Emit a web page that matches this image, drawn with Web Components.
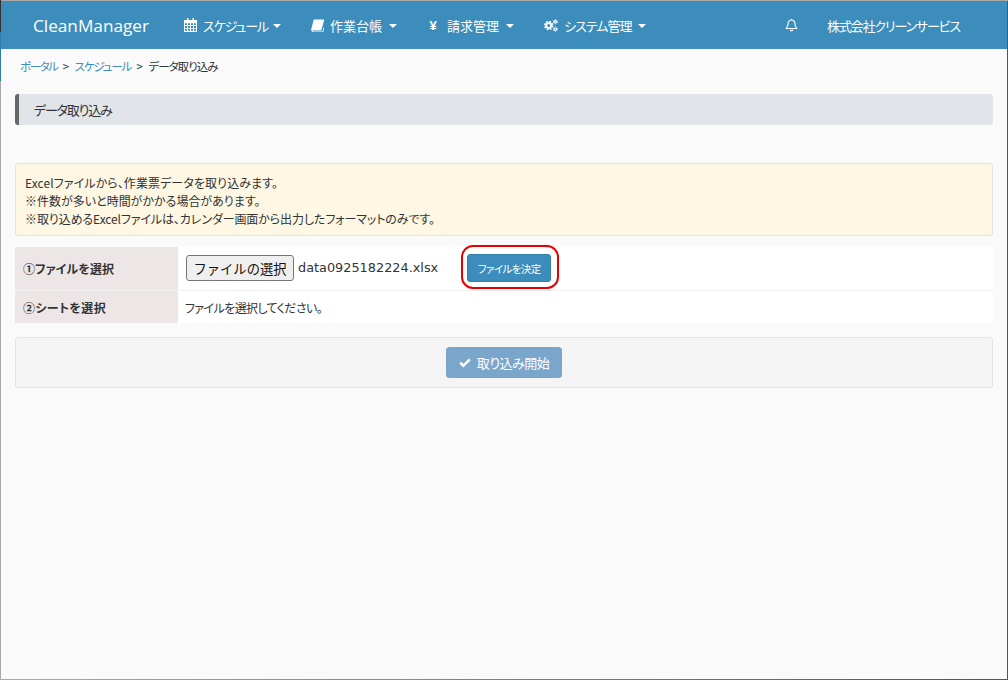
<!DOCTYPE html>
<html lang="ja">
<head>
<meta charset="utf-8">
<title>データ取り込み</title>
<style>
  html, body { margin: 0; height: 100%; }
  body {
    background:
      linear-gradient(#333 0 32px, #2f7ea8 32px 81px, #a8a8a8 81px) left top / 1px 100% no-repeat,
      linear-gradient(#a8a8a8, #a8a8a8) left top / 100% 1px no-repeat,
      linear-gradient(#555, #555) right top / 1px 100% no-repeat,
      linear-gradient(to right, #aaa, #555) left bottom / 100% 1px no-repeat,
      #fafafa;
    font-family: "Noto Sans CJK JP", "Liberation Sans", sans-serif;
    font-size: 12px;
    font-feature-settings: "palt";
    color: #333;
    box-sizing: border-box;
    padding: 1px;
    overflow: hidden;
  }
</style>
</head>
<body>
<cm-navbar></cm-navbar>
<cm-breadcrumb></cm-breadcrumb>
<cm-page>
  <cm-title>データ取り込み</cm-title>
  <cm-notice>
    <div style="letter-spacing:.08px">Excelファイルから、作業票データを取り込みます。</div>
    <div>※件数が多いと時間がかかる場合があります。</div>
    <div style="letter-spacing:-.1px">※取り込めるExcelファイルは、カレンダー画面から出力したフォーマットのみです。</div>
  </cm-notice>
  <cm-import-form></cm-import-form>
  <cm-footer-bar></cm-footer-bar>
</cm-page>

<script>
'use strict';
const ICONS = {
  calendar: `<svg viewBox="0 0 13 14" width="13" height="14" fill="currentColor"><path fill-rule="evenodd" d="M0 2h13v12H0zM1 5.200v1.900h2V5.200zM4 5.200v1.900h2V5.200zM7 5.200v1.900h2V5.200zM10 5.200v1.900h2V5.200zM1 8v1.900h2V8zM4 8v1.900h2V8zM7 8v1.900h2V8zM10 8v1.900h2V8zM1 10.800v1.900h2v-1.900zM4 10.800v1.900h2v-1.900zM7 10.800v1.900h2v-1.900zM10 10.800v1.900h2v-1.900z"/><path d="M3 0h1.500v3H3zM8.500 0H10v3H8.500z"/></svg>`,
  book: `<svg viewBox="0 0 13 13" width="13" height="13" fill="currentColor"><path d="M3.500 0.500H12.500c.5 0 .7.400.6.900L10.600 10.500c-.2.800-.7 1-1.300 1H2.200c-.6 0-.9.300-.7.700.1.300.5.400.9.400h8.500c.4 0 .7-.2.800-.6l2-7.200.4.300c.2.200.3.500.2.900l-2.300 7.700c-.2.600-.6.800-1.200.8H2C.9 12.500.200 11.700.200 10.700c0-.3 0-.5.100-.8L2.500 1.400C2.700.800 3 .5 3.500.500z"/></svg>`,
  bell: `<svg viewBox="0 0 14 14" width="13" height="14" fill="none" stroke="currentColor" stroke-width="1.200"><path d="M7 1.600c-2.400 0-3.700 1.700-3.700 3.900 0 3-1 4.300-2 5.300h11.400c-1-1-2-2.300-2-5.300 0-2.200-1.300-3.900-3.700-3.900z"/><path d="M5.700 12c.1.800.6 1.300 1.300 1.300s1.200-.5 1.300-1.300" /><path d="M7 .5v1" /></svg>`,
  cogs: `<svg viewBox="0 0 14 13" width="14" height="13" fill="none" stroke="currentColor"><circle cx="4.700" cy="6.500" r="2.500" stroke-width="1.900"/><circle cx="4.700" cy="6.500" r="4" stroke-width="1.400" stroke-dasharray="1.800 1.340"/><circle cx="11.300" cy="2.800" r="1.200" stroke-width="1.100"/><circle cx="11.300" cy="2.800" r="2.100" stroke-width="1" stroke-dasharray="1.100 1.100"/><circle cx="11.300" cy="10.200" r="1.200" stroke-width="1.100"/><circle cx="11.300" cy="10.200" r="2.100" stroke-width="1" stroke-dasharray="1.100 1.100"/></svg>`,
  check: `<svg viewBox="0 0 13 11" width="12" height="10" fill="currentColor"><path d="M4.700 10.500 .3 6.100l1.900-1.900 2.500 2.500L10.800.6l1.900 1.900z"/></svg>`
};

class CmNavItem extends HTMLElement {
  connectedCallback() {
    const icon = this.getAttribute('icon');
    this.attachShadow({mode: 'open'}).innerHTML = `
  <style>
    :host {
      display: flex;
      align-items: center;
      color: #fff;
      font-size: 13px;
      white-space: nowrap;
    }
    .icon { display: flex; margin-right: 6px; }
    .yen { font: bold 13px "Liberation Sans", sans-serif; margin: 0 10px 0 2px; width: 8px; text-align: center; }
    .caret {
      margin-left: var(--caret-gap, 7px);
      border-top: 4px solid #fff;
      border-left: 4px solid transparent;
      border-right: 4px solid transparent;
      margin-top: 2px;
    }
  </style>
  ${icon === 'yen' ? '<span class="yen">¥</span>' : `<span class="icon">${ICONS[icon]}</span>`}
  <slot></slot>
  <span class="caret"></span>`;
  }
}
customElements.define('cm-nav-item', CmNavItem);

class CmNavbar extends HTMLElement {
  connectedCallback() {
    this.attachShadow({mode: 'open'}).innerHTML = `
  <style>
    :host {
      display: flex;
      align-items: center;
      height: 48px;
      background: #3c8dbc;
      color: #fff;
      padding-left: 32px;
    }
    .brand {
      font: 17.200px "Open Sans", "Liberation Sans", sans-serif;
      margin-right: 35px;
    }
    nav { display: flex; gap: 30px; }
    .bell { display: flex; margin-left: auto; }
    .company { font-size: 13px; letter-spacing: -1.150px; margin: 0 47px 0 29px; white-space: nowrap; }
  </style>
  <span class="brand">CleanManager</span>
  <nav>
    <cm-nav-item icon="calendar" style="letter-spacing:-1.1px;--caret-gap:5px">スケジュール</cm-nav-item>
    <cm-nav-item icon="book">作業台帳</cm-nav-item>
    <cm-nav-item icon="yen">請求管理</cm-nav-item>
    <cm-nav-item icon="cogs" style="letter-spacing:-1px">システム管理</cm-nav-item>
  </nav>
  <span class="bell">${ICONS.bell}</span>
  <span class="company">株式会社クリーンサービス</span>`;
  }
}
customElements.define('cm-navbar', CmNavbar);

class CmBreadcrumb extends HTMLElement {
  connectedCallback() {
    this.attachShadow({mode: 'open'}).innerHTML = `
  <style>
    :host {
      display: flex;
      gap: 5.500px;
      padding: 9px 0 0 19px;
      height: 36px;
      box-sizing: border-box;
      font-size: 11.500px;
      color: #333;
      line-height: 17px;
    }
    a { color: #3c8dbc; text-decoration: none; letter-spacing: -1.150px; }
    a.top { letter-spacing: -1.500px; }
    .here { letter-spacing: -1px; }
  </style>
  <a class="top" href="#">ポータル</a><span>&gt;</span><a href="#">スケジュール</a><span>&gt;</span><span class="here">データ取り込み</span>`;
  }
}
customElements.define('cm-breadcrumb', CmBreadcrumb);

class CmPage extends HTMLElement {
  connectedCallback() {
    this.attachShadow({mode: 'open'}).innerHTML = `
  <style>
    :host { display: block; padding: 9px 14px 0; }
  </style>
  <slot></slot>`;
  }
}
customElements.define('cm-page', CmPage);

class CmTitle extends HTMLElement {
  connectedCallback() {
    this.attachShadow({mode: 'open'}).innerHTML = `
  <style>
    :host {
      display: flex;
      align-items: center;
      height: 31px;
      box-sizing: border-box;
      background: #e1e5ea;
      border-left: 4px solid #666;
      border-radius: 3px;
      padding-left: 15px;
      font-size: 13px;
      letter-spacing: -1.200px;
    }
  </style>
  <slot></slot>`;
  }
}
customElements.define('cm-title', CmTitle);

class CmNotice extends HTMLElement {
  connectedCallback() {
    this.attachShadow({mode: 'open'}).innerHTML = `
  <style>
    :host {
      display: block;
      margin-top: 38px;
      height: 73px;
      box-sizing: border-box;
      padding: 10px 9px;
      background: #fdf7e3;
      border: 1px solid #e3e3e3;
      border-radius: 3px;
      font-size: 12px;
      line-height: 18px;
    }
  </style>
  <slot></slot>`;
  }
}
customElements.define('cm-notice', CmNotice);

class CmImportForm extends HTMLElement {
  connectedCallback() {
    this.attachShadow({mode: 'open'}).innerHTML = `
  <style>
    :host {
      display: grid;
      grid-template-columns: 163px 1fr;
      grid-template-rows: 43px 32px;
      row-gap: 1px;
      margin-top: 11px;
      background: #f0f0f0;
      font-size: 12px;
    }
    .head {
      display: flex;
      align-items: center;
      background: #ece6e6;
      font-weight: bold;
      padding-left: 8px;
      letter-spacing: .1px;
    }
    .head.second { letter-spacing: .4px; }
    .cell {
      display: flex;
      align-items: center;
      background: #fff;
      padding-left: 8px;
    }
    .cell.first { padding-bottom: 1px; }
    .hint { letter-spacing: -.6px; margin-left: -1px; }
    .picker {
      font: 13.300px "Noto Sans CJK JP", sans-serif;
      height: 26px;
      width: 108px;
      box-sizing: border-box;
      margin: 0;
      padding: 0;
      background: #efefef;
      border: 1px solid #767676;
      border-radius: 3px;
      color: #111;
    }
    .name { font: 12.850px "DejaVu Sans", sans-serif; margin: 0 0 2px 4px; color: #333; }
    .ring {
      position: relative;
      margin-left: 29px;
    }
    .ring::after {
      content: "";
      position: absolute;
      inset: -9px -8px -7px -6px;
      border: 2px solid #e60000;
      border-radius: 12px;
    }
    .decide {
      display: block;
      height: 28px;
      width: 84px;
      padding: 0;
      background: #3c8dbc;
      border: 1px solid #367fa9;
      border-radius: 3px;
      color: #fff;
      font: 10.500px "Noto Sans CJK JP", sans-serif;
      font-feature-settings: "palt";
      letter-spacing: -.6px;
    }
  </style>
  <div class="head">①ファイルを選択</div>
  <div class="cell first">
    <button class="picker" type="button">ファイルの選択</button>
    <span class="name">data0925182224.xlsx</span>
    <span class="ring"><button class="decide" type="button">ファイルを決定</button></span>
  </div>
  <div class="head second">②シートを選択</div>
  <div class="cell"><span class="hint">ファイルを選択してください。</span></div>`;
  }
}
customElements.define('cm-import-form', CmImportForm);

class CmFooterBar extends HTMLElement {
  connectedCallback() {
    this.attachShadow({mode: 'open'}).innerHTML = `
  <style>
    :host {
      display: flex;
      align-items: center;
      justify-content: center;
      height: 51px;
      box-sizing: border-box;
      margin-top: 14px;
      background: #f5f5f5;
      border: 1px solid #e3e3e3;
      border-radius: 3px;
    }
    button {
      display: flex;
      align-items: center;
      gap: 6px;
      justify-content: center;
      width: 116px;
      height: 31px;
      padding: 0;
      background: #7ba6cb;
      border: 1px solid #7ba6cb;
      border-radius: 3px;
      color: #fff;
      font: 13px "Noto Sans CJK JP", sans-serif;
      font-feature-settings: "palt";
      letter-spacing: -.5px;
    }
  </style>
  <button type="button" disabled>${ICONS.check}取り込み開始</button>`;
  }
}
customElements.define('cm-footer-bar', CmFooterBar);
</script>
</body>
</html>
